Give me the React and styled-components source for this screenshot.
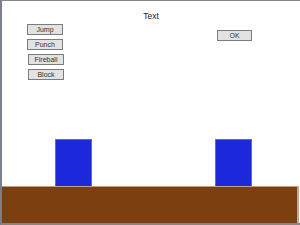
import React from "react";
import styled, { createGlobalStyle } from "styled-components";

const GlobalStyle = createGlobalStyle`
  html, body {
    margin: 0;
    padding: 0;
    background: #fff;
  }
`;

const Stage = styled.div`
  width: 300px;
  height: 225px;
  box-sizing: border-box;
  border-top: 1px solid #80868c;
  border-left: 2px solid #7a8088;
  border-bottom: 2px solid #80868c;
  display: flex;
  flex-direction: column;
  font-family: "Liberation Sans", Arial, sans-serif;
  background: #fff;
  overflow: hidden;
`;

const Title = styled.div`
  margin-top: 10px;
  height: 10px;
  line-height: 10px;
  font-size: 8.5px;
  color: #222;
  text-align: center;
`;

const MenuRow = styled.div`
  display: flex;
  justify-content: space-between;
  margin-top: 3px;
  padding: 0 48px 0 25px;
`;

const Controls = styled.div`
  display: flex;
  flex-direction: column;
  gap: 4px;
`;

const Button = styled.div`
  box-sizing: border-box;
  width: 36px;
  height: 11px;
  margin-left: ${(p) => p.$shift || 0}px;
  background: #e2e2e2;
  border: 1px solid #7c7c7c;
  font-size: 7px;
  line-height: 9px;
  text-align: center;
  color: #333;
`;

const OkButton = styled(Button)`
  width: 35px;
  margin-top: 6px;
`;

const Field = styled.div`
  flex: 1;
  display: flex;
  align-items: flex-end;
  padding-left: 53px;
  gap: 123px;
`;

const Block = styled.div`
  box-sizing: border-box;
  width: 37px;
  height: 47px;
  background: #1c28dc;
  border: 1px solid #5a64ec;
  border-bottom: none;
`;

const Ground = styled.div`
  height: 37px;
  margin-right: 1px;
  box-sizing: border-box;
  background: #7b3f10;
  border-top: 1px solid #c4a088;
  border-right: 2px solid #c8a88c;
`;

export default function App() {
  return (
    <>
      <GlobalStyle />
      <Stage>
        <Title>Text</Title>
        <MenuRow>
          <Controls>
            <Button>Jump</Button>
            <Button>Punch</Button>
            <Button $shift={1}>Fireball</Button>
            <Button $shift={1}>Block</Button>
          </Controls>
          <OkButton>OK</OkButton>
        </MenuRow>
        <Field>
          <Block />
          <Block />
        </Field>
        <Ground />
      </Stage>
    </>
  );
}
